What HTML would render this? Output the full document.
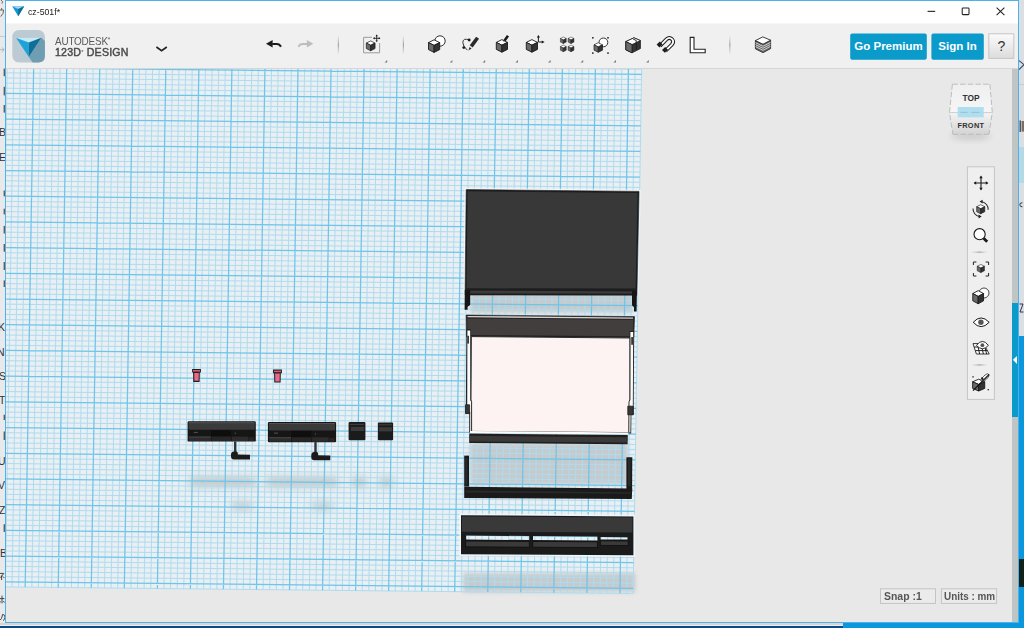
<!DOCTYPE html>
<html><head><meta charset="utf-8">
<style>
html,body{margin:0;padding:0;width:1024px;height:628px;overflow:hidden;background:#f2f2f2;font-family:"Liberation Sans",sans-serif;}
.a{position:absolute}
#title{left:6px;top:1px;width:1012px;height:22px;background:#fff}
#tb{left:6px;top:23px;width:1012px;height:45px;background:#f0f0f0;border-bottom:1px solid #d6d6d6;border-top:0;box-shadow:inset 0 1px 0 #f7f7f7}
#vp{left:6px;top:69px;width:1012px;height:553px;background:#e8e8e8}
.btn{background:#0b9bcb;color:#fff;font-weight:bold;font-size:12px;border-radius:2px;text-align:center;line-height:26px;height:26px;top:33px}
</style></head><body>
<!-- desktop behind -->
<div class="a" style="left:0;top:0;width:5px;height:623px;background:#e9e9eb"></div>
<div class="a" style="left:0;top:36px;width:5px;height:1px;background:#c8c8c8"></div>
<div class="a" style="left:1019px;top:0;width:5px;height:628px;background:#dcdfe2"></div>
<div class="a" style="left:1019px;top:147px;width:5px;height:36px;background:#b6d9e6"></div>
<div class="a" style="left:1019px;top:336px;width:5px;height:292px;background:#0b97dc"></div>
<div class="a" style="left:1019px;top:559px;width:5px;height:28px;background:#10221a"></div>
<div class="a" style="left:0;top:623px;width:843px;height:2px;background:#d8d4d0"></div><div class="a" style="left:0;top:625px;width:843px;height:1px;background:#ececec"></div>
<div class="a" style="left:0;top:626px;width:843px;height:2px;background:#0b4a8a"></div>
<div class="a" style="left:843px;top:623px;width:181px;height:5px;background:#0b97dc"></div>
<div class="a" style="left:0;top:0;width:5px;height:623px;overflow:hidden">
 <div class="a" style="left:-1px;top:126px;font-size:10.5px;color:#333;line-height:12px">B</div>
 <div class="a" style="left:-1px;top:151px;font-size:10.5px;color:#333;line-height:12px">E</div>
 <div class="a" style="left:-2px;top:321px;font-size:10.5px;color:#333;line-height:12px">K</div>
 <div class="a" style="left:-3px;top:346px;font-size:10.5px;color:#333;line-height:12px">N</div>
 <div class="a" style="left:-1px;top:370px;font-size:10.5px;color:#333;line-height:12px">S</div>
 <div class="a" style="left:-1px;top:394px;font-size:10.5px;color:#333;line-height:12px">T</div>
 <div class="a" style="left:-2px;top:455px;font-size:10.5px;color:#333;line-height:12px">U</div>
 <div class="a" style="left:-2px;top:479px;font-size:10.5px;color:#333;line-height:12px">V</div>
 <div class="a" style="left:-1px;top:504px;font-size:10.5px;color:#333;line-height:12px">Z</div>
 <div class="a" style="left:0px;top:547px;font-size:10.5px;color:#333;line-height:12px">B</div>
</div>
<svg class="a" style="left:0;top:0" width="6" height="623">
 <path d="M0,49.7 L4,49.7 M1.8,47.4 L4.2,49.7 L1.8,52" fill="none" stroke="#b0b0b0" stroke-width="0.9"/><path d="M1,0 Q3.5,1.5 2,3.6" fill="none" stroke="#6a5a4a" stroke-width="0.9"/><path d="M0,10 L3.6,10 Q4,13.5 0.6,16.6 M1.6,8 L1.6,10" fill="none" stroke="#6a5a4a" stroke-width="0.9"/><path d="M0,573.4 L3.8,573.4 L0.4,577.6 M1.6,575.6 L1.6,580 M2.8,576.4 L4.4,578" fill="none" stroke="#333" stroke-width="0.9"/><path d="M0,598.6 L4.4,598.6 M2,595.6 L2,603.4 M0.4,601.4 L0,602.6 M3.4,601 L4.4,602.6" fill="none" stroke="#333" stroke-width="0.9"/><path d="M2.6,614.4 Q1.6,619.6 0.2,620 M2.6,614.4 Q5.4,614.6 5,617.4 Q4.6,620 3,620.6" fill="none" stroke="#333" stroke-width="0.9"/>
 <g fill="#6e5a50">
  <rect x="3.6" y="68.6" width="1.4" height="7.6"/><rect x="3.6" y="86.8" width="1.4" height="8.6"/><rect x="3.6" y="105" width="1.4" height="7.6"/>
  <rect x="3.6" y="190.5" width="1.4" height="5.8"/><rect x="3.6" y="208.7" width="1.4" height="5.7"/><rect x="3.6" y="225.9" width="1.4" height="7.6"/>
  <rect x="3.6" y="244" width="1.4" height="7.7"/><rect x="3.6" y="262" width="1.4" height="8"/><rect x="3.6" y="280.4" width="1.4" height="6.6"/>
  <rect x="3.6" y="414.7" width="1.4" height="5.3"/><rect x="3.6" y="431.5" width="1.4" height="8.5"/><rect x="3.6" y="524.2" width="1.4" height="7.7"/>
 </g>
</svg>

<svg class="a" style="left:1019px;top:0" width="5" height="628"><path d="M0,60.6 L5,64.6 L0,69.6" fill="none" stroke="#3a4a6a" stroke-width="1.1"/><rect x="0" y="84" width="5" height="1" fill="#c8ccd0"/><rect x="0.6" y="120.4" width="1.2" height="11.6" fill="#2a3550"/><rect x="2.6" y="121" width="2.4" height="10.6" fill="#6a5040" opacity="0.8"/><path d="M3.4,202.8 Q0.6,202.6 0.8,204.8 Q1,207 3.4,206.8" fill="none" stroke="#333" stroke-width="1"/><path d="M0.5,304 L4,304 L1,312 L4.5,312" fill="none" stroke="#335" stroke-width="1"/></svg>
<!-- window frame -->
<div class="a" style="left:5px;top:0;width:1014px;height:623px;box-sizing:border-box;border:1px solid #4ab3ee"></div>
<div class="a" id="title"></div>
<div class="a" id="tb"></div>
<div class="a" id="vp"></div>


<!-- TITLE BAR -->
<svg class="a" style="left:0;top:0" width="1024" height="68" viewBox="0 0 1024 68">
  <defs>
    <g id="cube">
      <path d="M6,0.4 L11.6,3.2 L6,6 L0.4,3.2 Z" fill="#fff" stroke="#1a1a1a" stroke-width="0.9"/>
      <path d="M0.4,3.2 L6,6 L6,13 L0.4,10.2 Z" fill="#6a6a6a" stroke="#1a1a1a" stroke-width="0.9"/>
      <path d="M6,6 L11.6,3.2 L11.6,10.2 L6,13 Z" fill="#333" stroke="#1a1a1a" stroke-width="0.9"/>
    </g>
    <path id="tri" d="M0,2.6 L2.6,0 L2.6,2.6 Z" fill="#777"/>
  </defs>
  <!-- app icon small -->
  <path d="M12.2,6.2 L24.2,6.2 L18.2,16.2 Z" fill="#1497cf"/>
  <path d="M12.2,6.2 L24.2,6.2 L18.2,9 Z" fill="#9fd9f0"/>
  <path d="M18.2,9 L24.2,6.2 L18.2,16.2 Z" fill="#0d6f97"/>
  <!-- window controls -->
  <rect x="927.6" y="10.8" width="7.6" height="1.1" fill="#222"/>
  <rect x="962.2" y="8" width="6.8" height="6.6" rx="0.8" fill="none" stroke="#222" stroke-width="1.05"/>
  <path d="M996.6,7.6 L1004.4,15.2 M1004.4,7.6 L996.6,15.2" stroke="#222" stroke-width="1.05"/>

  <!-- logo -->
  <rect x="12.3" y="30" width="32.6" height="32.5" rx="6.5" fill="#bccbd3"/>
  <path d="M41.4,37.7 L44.9,41 L44.9,56 Q44.9,62.5 38.4,62.5 L32.6,62.5 L28.8,57 Z" fill="#6f9db1"/>
  <path d="M16.2,38 L41.4,37.7 L28.8,42.6 Z" fill="#c4e9f7"/>
  <path d="M16.2,38 L28.8,42.6 L28.8,57 Z" fill="#1ba3da"/>
  <path d="M28.8,42.6 L41.4,37.7 L28.8,57 Z" fill="#0f6f96"/>

  <!-- chevron -->
  <path d="M156.4,47 L161.6,50.6 L166.8,47" fill="none" stroke="#222" stroke-width="1.7"/>

  <!-- undo / redo -->
  <path d="M272.2,43.9 L276.8,43.9 Q279.6,43.9 281,46.8" fill="none" stroke="#1c1c1c" stroke-width="2"/>
  <path d="M266,43.8 L272.6,40 L272.6,47.6 Z" fill="#1c1c1c"/>
  <path d="M307.2,43.9 L302.6,43.9 Q299.8,43.9 298.4,46.8" fill="none" stroke="#bdbdbd" stroke-width="2"/>
  <path d="M313.4,43.8 L306.8,40 L306.8,47.6 Z" fill="#bdbdbd"/>

  <!-- separators -->
  <linearGradient id="vsep" x1="0" y1="0" x2="0" y2="1"><stop offset="0" stop-color="#aaa" stop-opacity="0"/><stop offset="0.5" stop-color="#999"/><stop offset="1" stop-color="#aaa" stop-opacity="0"/></linearGradient>
  <rect x="337.8" y="35" width="1.1" height="20" fill="url(#vsep)"/>
  <rect x="402.8" y="35" width="1.1" height="20" fill="url(#vsep)"/>
  <rect x="729.3" y="35" width="1.1" height="20" fill="url(#vsep)"/>

  <!-- import icon -->
  <path d="M372,37.3 L363.6,37.3 L363.6,52.8 L379.6,52.8 L379.6,43" fill="none" stroke="#9a9a9a" stroke-width="1"/>
  <use href="#cube" transform="translate(366,40.6) scale(0.78)"/>
  <path d="M376.7,35.4 L376.7,41.2 M373.8,38.3 L379.6,38.3" stroke="#1a1a1a" stroke-width="0.85"/>
  <path d="M376.7,34.6 L375.5,36.2 L377.9,36.2 Z M376.7,42 L375.5,40.4 L377.9,40.4 Z M373,38.3 L374.6,37.1 L374.6,39.5 Z M380.4,38.3 L378.8,37.1 L378.8,39.5 Z" fill="#1a1a1a"/>

  <!-- primitives -->
  <circle cx="440" cy="41" r="5.2" fill="#fff" stroke="#333" stroke-width="1"/>
  <use href="#cube" transform="translate(428.1,39.4)"/>
  <!-- sketch -->
  <path d="M469,40 Q463,37.6 462.8,42.6 Q463,46.6 467.4,50.2" fill="none" stroke="#333" stroke-width="1"/>
  <circle cx="469.2" cy="40" r="1.4" fill="#1a1a1a"/>
  <circle cx="463.8" cy="47.6" r="1.4" fill="#1a1a1a"/>
  <path d="M477.6,37.8 L471.2,46.4" stroke="#2a2a2a" stroke-width="3.6"/>
  <path d="M469.6,47 L471.6,48.6 L468.4,50.6 Z" fill="#2a2a2a"/>
  <!-- modify -->
  <use href="#cube" transform="translate(495.9,39.2)"/>
  <path d="M508,35.8 L504.6,40.4" stroke="#1a1a1a" stroke-width="2.6"/>
  <path d="M503.2,41.6 L504,40 L505.2,41 Z" fill="#1a1a1a"/>
  <!-- transform -->
  <use href="#cube" transform="translate(525.9,39.2)"/>
  <path d="M538.4,42 L538.4,37 M538.4,42 L542.6,42" stroke="#1a1a1a" stroke-width="1"/>
  <path d="M538.4,35 L536.8,37.6 L540,37.6 Z M544.6,42 L541.8,40.4 L541.8,43.6 Z" fill="#1a1a1a"/>
  <!-- pattern -->
  <use href="#cube" transform="translate(560.2,36.8) scale(0.52)"/>
  <use href="#cube" transform="translate(567.9,36.8) scale(0.52)"/>
  <use href="#cube" transform="translate(560.2,44.9) scale(0.52)"/>
  <use href="#cube" transform="translate(567.9,44.9) scale(0.52)"/>
  <!-- group -->
  <circle cx="603.4" cy="42.4" r="4.4" fill="#fff" stroke="#333" stroke-width="1"/>
  <use href="#cube" transform="translate(593.7,42.4) scale(0.76)"/>
  <rect x="592" y="37" width="1.6" height="1.6" fill="#333"/>
  <rect x="607.2" y="37" width="1.6" height="1.6" fill="#333"/>
  <rect x="592" y="52.3" width="1.6" height="1.6" fill="#333"/>
  <rect x="607.2" y="52.3" width="1.6" height="1.6" fill="#333"/>
  <!-- combine -->
  <path d="M625.8,41.6 L634,37.8 L640.4,40.6 L640.4,48.6 L632,52.8 L625.8,49.8 Z" fill="#333" stroke="#1a1a1a" stroke-width="0.8"/>
  <path d="M625.8,41.6 L634,37.8 L640.4,40.6 L632,44.6 Z" fill="#fff" stroke="#1a1a1a" stroke-width="0.8"/>
  <path d="M625.8,41.6 L632,44.6 L632,52.8 L625.8,49.8 Z" fill="#6a6a6a" stroke="#1a1a1a" stroke-width="0.8"/>
  <path d="M633.2,39.2 L636.2,40.4 L636.4,49.8" fill="none" stroke="#1a1a1a" stroke-width="0.9"/>
  <!-- magnet -->
  <path d="M660,45.8 L666.6,39.2 Q669.4,36.6 672,39.2 Q674.4,41.8 671.8,44.6 L665.4,51" fill="none" stroke="#1d1d1d" stroke-width="3.8"/>
  <path d="M660,45.8 L666.6,39.2 Q669.4,36.6 672,39.2 Q674.4,41.8 671.8,44.6 L665.4,51" fill="none" stroke="#fff" stroke-width="1.8"/>
  <path d="M656.6,44.6 L659.8,41.6 L662.6,44.4 L659.4,47.4 Z M662,50 L665.2,47 L668,49.8 L664.8,52.8 Z" fill="#1d1d1d"/>
  <!-- measure -->
  <path d="M690.2,37.4 L694,37.4 L694,49.2 L705.2,49.2 L705.2,52.8 L690.2,52.8 Z" fill="#fff" stroke="#222" stroke-width="1.1"/>
  <!-- material -->
  <path d="M755.4,40.6 L763,44.2 L770.6,40.2 L770.6,48.6 L763,52.6 L755.4,48.8 Z" fill="#6a6a6a" stroke="#222" stroke-width="0.9"/>
  <g stroke="#f4f4f4" stroke-width="0.7" fill="none">
    <path d="M755.4,42.6 L763,46.3 L770.6,42.3 M755.4,44.6 L763,48.3 L770.6,44.3 M755.4,46.6 L763,50.3 L770.6,46.3"/>
  </g>
  <path d="M755.4,40.6 L762.8,36.9 L770.6,40.2 L763,44.2 Z" fill="#fff" stroke="#2a2a2a" stroke-width="0.9"/>
  <!-- small triangles -->
  <use href="#tri" x="384.6" y="60"/>
  <use href="#tri" x="449.8" y="60"/>
  <use href="#tri" x="482.6" y="60"/>
  <use href="#tri" x="515.4" y="60"/>
  <use href="#tri" x="548" y="60"/>
  <use href="#tri" x="580.6" y="60"/>
  <use href="#tri" x="613.4" y="60"/>
  <use href="#tri" x="646.2" y="60"/>

  <!-- help button -->
  <linearGradient id="hg" x1="0" y1="0" x2="0" y2="1"><stop offset="0" stop-color="#fbfbfb"/><stop offset="1" stop-color="#dcdcdc"/></linearGradient>
  <rect x="988.8" y="33.8" width="25" height="24.6" fill="url(#hg)" stroke="#c6c6c6" stroke-width="1"/>
  <rect x="850.2" y="33.4" width="76.6" height="26.4" rx="2" fill="#0b9bcb"/>
  <rect x="931.4" y="33.4" width="52.4" height="26.4" rx="2" fill="#0b9bcb"/>
</svg>
<div class="a" style="left:28px;top:6.4px;font-size:9.5px;color:#222;line-height:12px;transform:scaleX(0.92);transform-origin:0 0">cz-501f*</div>
<div class="a" style="left:55px;top:34.6px;font-size:11px;color:#5a5a5a;line-height:12px;transform:scaleX(0.9);transform-origin:0 0;letter-spacing:-0.2px">AUTODESK<span style="font-size:7px;vertical-align:top;position:relative;top:-1px">*</span></div>
<div class="a" style="left:55px;top:45.5px;font-size:11px;font-weight:normal;-webkit-text-stroke:0.45px #4a4a4a;color:#4a4a4a;line-height:12px;transform:scaleX(0.965);transform-origin:0 0;letter-spacing:0.2px">123D<span style="font-size:6px;vertical-align:top;position:relative;top:0px;-webkit-text-stroke:0">*</span> DESIGN</div>
<div class="a" style="left:850px;top:33px;width:77px;text-align:center;font-size:11.5px;font-weight:bold;color:#fff;line-height:26px">Go Premium</div>
<div class="a" style="left:931px;top:33px;width:53px;text-align:center;font-size:11.5px;font-weight:bold;color:#fff;line-height:26px">Sign In</div>
<div class="a" style="left:989px;top:33px;width:25px;text-align:center;font-size:14px;color:#333;line-height:26px">?</div>

<!-- viewport svg -->
<svg class="a" style="left:0;top:0" width="1024" height="628" viewBox="0 0 1024 628">
  <defs>
    <clipPath id="vpc"><rect x="6" y="69" width="1006" height="553"/></clipPath>
    <filter id="blur4" x="-50%" y="-50%" width="200%" height="200%"><feGaussianBlur stdDeviation="4"/></filter>
    <filter id="gblur" x="0" y="0" width="1024" height="628" filterUnits="userSpaceOnUse"><feGaussianBlur stdDeviation="0.35"/></filter>
    <filter id="blur2" x="-50%" y="-50%" width="200%" height="200%"><feGaussianBlur stdDeviation="2"/></filter>
  </defs>
  <g clip-path="url(#vpc)">
    <polygon points="-12.53,62.36 641.66,69.23 633.13,593.51 -21.06,586.64" fill="#e9eff2"/>
    <!-- shadows -->
    <g fill="#8a8a8a" opacity="0.5" filter="url(#blur4)">
      <rect x="190" y="478" width="66" height="8"/>
      <rect x="266" y="478" width="72" height="8"/>
      <rect x="352" y="478" width="14" height="8"/>
      <rect x="380" y="478" width="12" height="8"/>
      <rect x="232" y="503" width="20" height="6"/>
      <rect x="312" y="503" width="20" height="6"/>
    </g>
    <g fill="#8a8a8a" opacity="0.36" filter="url(#blur2)">
      <rect x="470" y="293" width="163" height="20"/>
      <rect x="470" y="443" width="158" height="42"/>
      <rect x="463" y="573" width="172" height="19"/>
    </g>
    <g>
    <path d="M-12.53 62.36L-21.06 586.64M-5.93 62.43L-14.45 586.71M7.29 62.57L-1.24 586.85M13.90 62.64L5.37 586.92M20.51 62.71L11.98 586.99M27.11 62.78L18.59 587.06M40.33 62.92L31.80 587.20M46.94 62.99L38.41 587.27M53.55 63.06L45.02 587.34M60.15 63.13L51.63 587.41M73.37 63.27L64.84 587.55M79.98 63.34L71.45 587.62M86.59 63.41L78.06 587.69M93.19 63.47L84.67 587.75M106.41 63.61L97.88 587.89M113.02 63.68L104.49 587.96M119.63 63.75L111.10 588.03M126.23 63.82L117.71 588.10M139.45 63.96L130.92 588.24M146.06 64.03L137.53 588.31M152.67 64.10L144.14 588.38M159.27 64.17L150.75 588.45M172.49 64.31L163.96 588.59M179.10 64.38L170.57 588.66M185.71 64.45L177.18 588.73M192.31 64.52L183.79 588.80M205.53 64.65L197.00 588.93M212.14 64.72L203.61 589.00M218.75 64.79L210.22 589.07M225.35 64.86L216.83 589.14M238.57 65.00L230.04 589.28M245.18 65.07L236.65 589.35M251.79 65.14L243.26 589.42M258.39 65.21L249.87 589.49M271.61 65.35L263.08 589.63M278.22 65.42L269.69 589.70M284.83 65.49L276.30 589.77M291.43 65.56L282.91 589.84M304.65 65.70L296.12 589.98M311.26 65.76L302.73 590.04M317.87 65.83L309.34 590.11M324.47 65.90L315.95 590.18M337.69 66.04L329.16 590.32M344.30 66.11L335.77 590.39M350.91 66.18L342.38 590.46M357.51 66.25L348.99 590.53M370.73 66.39L362.20 590.67M377.34 66.46L368.81 590.74M383.95 66.53L375.42 590.81M390.55 66.60L382.03 590.88M403.77 66.74L395.24 591.02M410.38 66.81L401.85 591.09M416.99 66.88L408.46 591.16M423.59 66.94L415.07 591.22M436.81 67.08L428.28 591.36M443.42 67.15L434.89 591.43M450.03 67.22L441.50 591.50M456.63 67.29L448.11 591.57M469.85 67.43L461.32 591.71M476.46 67.50L467.93 591.78M483.07 67.57L474.54 591.85M489.67 67.64L481.15 591.92M502.89 67.78L494.36 592.06M509.50 67.85L500.97 592.13M516.11 67.92L507.58 592.20M522.71 67.99L514.19 592.27M535.93 68.12L527.40 592.40M542.54 68.19L534.01 592.47M549.15 68.26L540.62 592.54M555.75 68.33L547.23 592.61M568.97 68.47L560.44 592.75M575.58 68.54L567.05 592.82M582.19 68.61L573.66 592.89M588.79 68.68L580.27 592.96M602.01 68.82L593.48 593.10M608.62 68.89L600.09 593.17M615.23 68.96L606.70 593.24M621.83 69.03L613.31 593.31M635.05 69.17L626.52 593.45M641.66 69.23L633.13 593.51M-12.53 62.36L641.66 69.23M-12.70 72.64L641.49 79.51M-12.79 77.78L641.41 84.65M-12.87 82.92L641.32 89.79M-12.95 88.06L641.24 94.93M-13.12 98.34L641.07 105.21M-13.20 103.48L640.99 110.35M-13.29 108.62L640.91 115.49M-13.37 113.76L640.82 120.63M-13.54 124.04L640.65 130.91M-13.62 129.18L640.57 136.05M-13.70 134.32L640.49 141.19M-13.79 139.46L640.40 146.33M-13.96 149.74L640.24 156.61M-14.04 154.88L640.15 161.75M-14.12 160.02L640.07 166.89M-14.21 165.16L639.99 172.03M-14.37 175.44L639.82 182.31M-14.46 180.58L639.73 187.45M-14.54 185.72L639.65 192.59M-14.62 190.86L639.57 197.73M-14.79 201.14L639.40 208.01M-14.88 206.28L639.32 213.15M-14.96 211.42L639.23 218.29M-15.04 216.56L639.15 223.43M-15.21 226.84L638.98 233.71M-15.29 231.98L638.90 238.85M-15.38 237.12L638.82 243.99M-15.46 242.26L638.73 249.13M-15.63 252.54L638.56 259.41M-15.71 257.68L638.48 264.55M-15.79 262.82L638.40 269.69M-15.88 267.96L638.31 274.83M-16.05 278.24L638.15 285.11M-16.13 283.38L638.06 290.25M-16.21 288.52L637.98 295.39M-16.30 293.66L637.90 300.53M-16.46 303.94L637.73 310.81M-16.55 309.08L637.64 315.95M-16.63 314.22L637.56 321.09M-16.71 319.36L637.48 326.23M-16.88 329.64L637.31 336.51M-16.97 334.78L637.23 341.65M-17.05 339.92L637.14 346.79M-17.13 345.06L637.06 351.93M-17.30 355.34L636.89 362.21M-17.38 360.48L636.81 367.35M-17.47 365.62L636.73 372.49M-17.55 370.76L636.64 377.63M-17.72 381.04L636.47 387.91M-17.80 386.18L636.39 393.05M-17.88 391.32L636.31 398.19M-17.97 396.46L636.22 403.33M-18.14 406.74L636.06 413.61M-18.22 411.88L635.97 418.75M-18.30 417.02L635.89 423.89M-18.39 422.16L635.81 429.03M-18.55 432.44L635.64 439.31M-18.64 437.58L635.55 444.45M-18.72 442.72L635.47 449.59M-18.80 447.86L635.39 454.73M-18.97 458.14L635.22 465.01M-19.06 463.28L635.14 470.15M-19.14 468.42L635.05 475.29M-19.22 473.56L634.97 480.43M-19.39 483.84L634.80 490.71M-19.47 488.98L634.72 495.85M-19.56 494.12L634.64 500.99M-19.64 499.26L634.55 506.13M-19.81 509.54L634.38 516.41M-19.89 514.68L634.30 521.55M-19.97 519.82L634.22 526.69M-20.06 524.96L634.13 531.83M-20.23 535.24L633.97 542.11M-20.31 540.38L633.88 547.25M-20.39 545.52L633.80 552.39M-20.48 550.66L633.72 557.53M-20.64 560.94L633.55 567.81M-20.73 566.08L633.46 572.95M-20.81 571.22L633.38 578.09M-20.89 576.36L633.30 583.23M-21.06 586.64L633.13 593.51" stroke="#aedcef" stroke-width="1" fill="none"/>
    <path d="M0.68 62.50L-7.85 586.78M33.72 62.85L25.19 587.13M66.76 63.20L58.23 587.48M99.80 63.54L91.27 587.82M132.84 63.89L124.31 588.17M165.88 64.24L157.35 588.52M198.92 64.59L190.39 588.86M231.96 64.93L223.43 589.21M265.00 65.28L256.47 589.56M298.04 65.63L289.51 589.91M331.08 65.97L322.55 590.25M364.12 66.32L355.59 590.60M397.16 66.67L388.63 590.95M430.20 67.01L421.67 591.29M463.24 67.36L454.71 591.64M496.28 67.71L487.75 591.99M529.32 68.06L520.79 592.33M562.36 68.40L553.83 592.68M595.40 68.75L586.87 593.03M628.44 69.10L619.91 593.38M-12.62 67.50L641.57 74.37M-13.04 93.20L641.16 100.07M-13.45 118.90L640.74 125.77M-13.87 144.60L640.32 151.47M-14.29 170.30L639.90 177.17M-14.71 196.00L639.48 202.87M-15.13 221.70L639.07 228.57M-15.54 247.40L638.65 254.27M-15.96 273.10L638.23 279.97M-16.38 298.80L637.81 305.67M-16.80 324.50L637.39 331.37M-17.22 350.20L636.98 357.07M-17.63 375.90L636.56 382.77M-18.05 401.60L636.14 408.47M-18.47 427.30L635.72 434.17M-18.89 453.00L635.30 459.87M-19.31 478.70L634.89 485.57M-19.72 504.40L634.47 511.27M-20.14 530.10L634.05 536.97M-20.56 555.80L633.63 562.67M-20.98 581.50L633.21 588.37" stroke="#6cc5ea" stroke-width="1.25" fill="none"/>
    </g>
    <!-- OBJECTS -->
    <g id="obj1">
      <path d="M465.1,295 L466.2,189.6 L639,191.4 L636.9,295.2" fill="none" stroke="#f4f8fa" stroke-opacity="0.8" stroke-width="3.4"/>
      <polygon points="466.2,189.6 639,191.4 636.9,295.2 465.1,295" fill="#1d1d1d" stroke="#1d1d1d" stroke-width="0.6"/>
      <polygon points="467.6,191.2 637.5,193 635.6,288.6 466.5,288.3" fill="#383838"/>
      <polygon points="467,290.4 634.6,291.6 634.6,293.6 467,293.4" fill="#3c3c3c"/>
      <polygon points="464.8,290 470.2,290 470.2,305 467.6,306.8 467.6,309.8 464.6,309.8" fill="#161616"/>
      <polygon points="632,291 636.9,291 636.6,311.4 634,311.4 634,307.2 632,305.2" fill="#161616"/>
    </g>
    <g id="obj2">
      <path d="M466.4,336.4 L466.1,315 L634.6,316.6 L633.8,337.6" fill="none" stroke="#f4f8fa" stroke-opacity="0.45" stroke-width="2.6"/>
      <polygon points="466.1,315 634.6,316.6 633.8,337.6 466.4,336.4" fill="#222" stroke="#222" stroke-width="0.6"/>
      <polygon points="467.3,318.4 633.3,319.8 632.8,336.2 467.5,335" fill="#433e3e"/>
      <line x1="467.5" y1="316.6" x2="633" y2="318.1" stroke="#d9d0d0" stroke-width="1.4"/>
      <polygon points="466.4,329.2 471,329.2 471.2,400 472.4,401.6 472.6,432.6 469.2,432.6 469.2,413.6 465.8,413.6" fill="#222"/>
      <polygon points="467.4,330.4 470.2,330.4 470.4,400.4 471.6,402 471.8,431.6 470.2,431.6 470.2,412 467.2,412" fill="#fbfbfb"/>
      <polygon points="634.2,331 629.6,331 629.4,399.8 628.2,401.4 627.8,433.4 631.2,433.4 631.4,414.8 633.6,414.8" fill="#222"/>
      <polygon points="633.2,332 630.4,332 630.2,400.2 629,401.8 628.8,432.6 630.4,432.6 630.6,413.8 632.8,413.8" fill="#fbfbfb"/>
      <polygon points="471.4,336.6 629.8,338 629.8,400 629,401.6 628.8,432.6 471.6,431.4 471.6,401.6 471,400" fill="#fdf3f3" stroke="#1c1c1c" stroke-width="0.9"/>
      <rect x="467.2" y="335.8" width="1.8" height="7.8" fill="#3a3a3a"/>
      <rect x="631.2" y="337" width="1.8" height="7.8" fill="#3a3a3a"/>
      <polygon points="465.5,404.8 469.6,404.8 469.6,413.6 465.5,413.6" fill="#3a3636" stroke="#1a1a1a" stroke-width="0.8"/>
      <polygon points="627.8,406.2 633.2,406.2 633.2,414.8 627.8,414.8" fill="#3a3636" stroke="#1a1a1a" stroke-width="0.8"/>
      <polygon points="470,431 628.6,432.4 628.2,434.4 470,433.2" fill="#fbfbfb"/>
      <polygon points="469.2,433.6 627.8,435 627.6,444.2 469.2,443" fill="#1f1f1f"/>
      <polygon points="469.8,435.8 627,437.2 626.8,442.6 469.8,441.6" fill="#3c3939"/>
    </g>
    <g id="obj3">
      <polygon points="464.2,455.6 469,455.6 469,486.6 464.2,486.6" fill="#1a1a1a"/>
      <polygon points="626.4,457.2 632.3,457.2 632.1,492 626.4,492" fill="#1a1a1a"/>
      <polygon points="464.2,486.8 632.2,488.4 631.8,499 464.2,498" fill="#1a1a1a"/>
      <polygon points="465.6,490.6 630.8,492.2 630.6,493.8 465.6,492.4" fill="#2a2a2a"/>
      <polygon points="465.3,457.8 467.4,457.8 467.4,485 465.3,485" fill="#2a2a2a"/>
      <polygon points="628,459 630.6,459 630.6,486 628,486" fill="#2a2a2a"/>
    </g>
    <g id="obj4">
      <polygon points="461,515.2 633.4,516.4 633.4,555.2 461,554.2" fill="none" stroke="#f4f8fa" stroke-opacity="0.8" stroke-width="3.4"/>
      <path fill-rule="evenodd" fill="#1b1b1b" d="M461,515.2 L633.4,516.4 L633.4,555.2 L461,554.2 Z M466.2,535.6 L529.2,536 L529.2,540 L466.2,539.6 Z M533,536 L597.4,536.4 L597.4,540.4 L533,540 Z M600.6,537 L627.6,537.2 L627.6,539.6 L600.6,539.4 Z"/>
      <polygon points="462,516.4 632.4,517.6 632.4,532.6 462,531.8" fill="#393939"/>
      <polygon points="465.6,541 529.4,541.4 529.4,547.2 465.6,546.8" fill="#3a3a3a" stroke="#0e0e0e" stroke-width="0.8"/>
      <polygon points="532.8,541.4 597.4,541.8 597.4,547.6 532.8,547.2" fill="#3a3a3a" stroke="#0e0e0e" stroke-width="0.8"/>
      <polygon points="600.4,540.8 628.2,541 628.2,545.6 600.4,545.4" fill="#3a3a3a" stroke="#0e0e0e" stroke-width="0.8"/>
    </g>
    <g id="small">
      <polygon points="192.1,369 200.9,369 200.9,372.6 199.8,372.6 199.6,381.9 193.3,381.9 193.1,372.6 192.1,372.6" fill="#1f1f1f"/>
      <polygon points="194.2,373 198.8,373 198.6,380.8 194.4,380.8" fill="#ec6a86"/><rect x="193" y="370" width="7" height="1.6" fill="#d85a74"/>
      <polygon points="273,369.6 281.9,369.6 281.9,373.2 280.8,373.2 280.6,382.4 274.3,382.4 274.1,373.2 273,373.2" fill="#1f1f1f"/>
      <polygon points="275.1,373.6 279.8,373.6 279.6,381.4 275.3,381.4" fill="#ec6a86"/><rect x="273.9" y="370.6" width="7.1" height="1.6" fill="#d85a74"/>

      <g transform="translate(0,0)">
      <rect x="187.6" y="421.2" width="68.2" height="20.4" rx="1.2" fill="#161616"/>
      <rect x="188.6" y="422.2" width="66.2" height="7.6" rx="0.8" fill="#3a3a3a"/>
      <rect x="188.8" y="422.3" width="65.8" height="0.9" fill="#555"/>
      <rect x="211" y="430.2" width="20" height="6" fill="#0e0e0e"/>
      <rect x="193.8" y="431.9" width="4" height="1" fill="#555"/>
      <circle cx="235.2" cy="433.2" r="0.7" fill="#555"/>
      <rect x="188.8" y="436.6" width="22" height="4.4" fill="#2c2c2c"/>
      <rect x="188.8" y="436.6" width="22" height="0.9" fill="#4a4a4a"/>
      <rect x="211.6" y="436.6" width="19.4" height="4.4" fill="#262626"/>
      <rect x="231.8" y="436.6" width="16.6" height="4.4" fill="#2c2c2c"/>
      <rect x="249" y="437.2" width="5.2" height="3.8" fill="#262626"/>
      <rect x="234" y="441.4" width="2.4" height="11.2" fill="#333"/>
      <path d="M233.6,451.4 L236.6,451.4 Q237.6,451.4 237.8,453 L237.8,454.6 L250,454.8 L250,459.6 L234,459.6 Q231,459.4 231,456.2 L231,454 Q231.2,451.4 233.6,451.4 Z" fill="#1b1b1b"/>
      </g>
      <g transform="translate(80.3,0.7)">
      <rect x="187.6" y="421.2" width="68.2" height="20.4" rx="1.2" fill="#161616"/>
      <rect x="188.6" y="422.2" width="66.2" height="7.6" rx="0.8" fill="#3a3a3a"/>
      <rect x="188.8" y="422.3" width="65.8" height="0.9" fill="#555"/>
      <rect x="211" y="430.2" width="20" height="6" fill="#0e0e0e"/>
      <rect x="193.8" y="431.9" width="4" height="1" fill="#555"/>
      <circle cx="235.2" cy="433.2" r="0.7" fill="#555"/>
      <rect x="188.8" y="436.6" width="22" height="4.4" fill="#2c2c2c"/>
      <rect x="188.8" y="436.6" width="22" height="0.9" fill="#4a4a4a"/>
      <rect x="211.6" y="436.6" width="19.4" height="4.4" fill="#262626"/>
      <rect x="231.8" y="436.6" width="16.6" height="4.4" fill="#2c2c2c"/>
      <rect x="249" y="437.2" width="5.2" height="3.8" fill="#262626"/>
      <rect x="234" y="441.4" width="2.4" height="11.2" fill="#333"/>
      <path d="M233.6,451.4 L236.6,451.4 Q237.6,451.4 237.8,453 L237.8,454.6 L250,454.8 L250,459.6 L234,459.6 Q231,459.4 231,456.2 L231,454 Q231.2,451.4 233.6,451.4 Z" fill="#1b1b1b"/>
      </g>
      <rect x="348.6" y="421.9" width="16.8" height="18.3" rx="1" fill="#1b1b1b"/>
      <rect x="349.8" y="423.8" width="14.4" height="1.2" fill="#3e3e3e"/>
      <rect x="350.8" y="426.8" width="13.4" height="4.2" fill="#3a3a3a"/>
      <rect x="377.9" y="422.4" width="15.2" height="17.8" rx="1" fill="#1b1b1b"/>
      <rect x="379" y="424.2" width="13" height="1.2" fill="#3e3e3e"/>
      <rect x="379" y="427.2" width="13" height="4.2" fill="#3a3a3a"/>
    </g>
  </g>
</svg>

<!-- VIEWPORT UI -->
<svg class="a" style="left:0;top:0" width="1024" height="628" viewBox="0 0 1024 628">
  <defs>
    <linearGradient id="vcf" x1="0" y1="0" x2="0" y2="1"><stop offset="0" stop-color="#f4f4f4"/><stop offset="1" stop-color="#d4d4d4"/></linearGradient>
    <linearGradient id="vct" x1="0" y1="0" x2="0" y2="1"><stop offset="0" stop-color="#efefef"/><stop offset="1" stop-color="#f6f6f6"/></linearGradient>
    <linearGradient id="sep" x1="0" y1="0" x2="1" y2="0"><stop offset="0" stop-color="#bbb" stop-opacity="0"/><stop offset="0.5" stop-color="#999"/><stop offset="1" stop-color="#bbb" stop-opacity="0"/></linearGradient>
    <filter id="vcs" x="-50%" y="-50%" width="200%" height="200%"><feGaussianBlur stdDeviation="3"/></filter>
    <g id="cube2">
      <path d="M6,0.4 L11.6,3.2 L6,6 L0.4,3.2 Z" fill="#fff" stroke="#1a1a1a" stroke-width="0.9"/>
      <path d="M0.4,3.2 L6,6 L6,13 L0.4,10.2 Z" fill="#6a6a6a" stroke="#1a1a1a" stroke-width="0.9"/>
      <path d="M6,6 L11.6,3.2 L11.6,10.2 L6,13 Z" fill="#333" stroke="#1a1a1a" stroke-width="0.9"/>
    </g>
  </defs>
  <!-- right strip -->
  <rect x="1012" y="69" width="6" height="553" fill="#bfc4c4"/>
  <rect x="1012" y="303" width="6" height="114" fill="#0a9bcb"/>
  <path d="M1012.9,359.8 L1017,355.9 L1017,363.9 Z" fill="#fff"/>

  <!-- view cube -->
  <ellipse cx="970.6" cy="136" rx="20" ry="4" fill="#000" opacity="0.12" filter="url(#vcs)"/>
  <path d="M952.4,84.2 L989.9,84.2 L992.3,112.6 L949.5,112.6 Z" fill="url(#vct)"/>
  <path d="M949.5,112.6 L992.3,112.6 L988.9,134.3 L952.9,134.3 Z" fill="url(#vcf)"/>
  <g fill="none" stroke="#b8b8b8" stroke-width="0.9" stroke-dasharray="5.5,2.2">
    <path d="M952.4,84.2 L989.9,84.2"/><path d="M989.9,84.2 L992.3,112.6 L988.9,134.3"/><path d="M952.9,134.3 L988.9,134.3"/><path d="M952.4,84.2 L949.5,112.6 L952.9,134.3"/>
  </g>
  <path d="M949.5,112.6 L992.3,112.6" stroke="#c4c4c4" stroke-width="0.8"/>
  <rect x="957.7" y="107" width="26" height="10.4" fill="#abdcef" opacity="0.95"/>
  <path d="M960.5,112.4 L967.5,112.4 M971.5,112.4 L979.5,112.4" stroke="#9ab8c4" stroke-width="0.8"/>

  <!-- nav bar -->
  <rect x="967.4" y="166.8" width="27" height="232.6" fill="#efefef" stroke="#c6c6c6" stroke-width="1"/>
  <!-- pan -->
  <g stroke="#1a1a1a" stroke-width="1.1">
    <path d="M981,176.4 L981,189.6 M974.4,183 L987.6,183"/>
  </g>
  <path d="M981,175.6 L979.3,178.2 L982.7,178.2 Z M981,190.4 L979.3,187.8 L982.7,187.8 Z M973.6,183 L976.2,181.3 L976.2,184.7 Z M988.4,183 L985.8,181.3 L985.8,184.7 Z" fill="#1a1a1a"/>
  <!-- orbit -->
  <use href="#cube2" transform="translate(976.4,204.4) scale(0.72)"/>
  <path d="M981.6,201.8 A7.6,7.6 0 0 1 988.2,209.8" fill="none" stroke="#222" stroke-width="1.05"/>
  <path d="M979.4,216.4 A7.6,7.6 0 0 1 973,208.6" fill="none" stroke="#222" stroke-width="1.05"/>
  <path d="M979.6,201.6 L982.6,199.8 L982.6,203.6 Z M981.6,216.6 L978.6,218.4 L978.6,214.6 Z" fill="#222"/>
  <!-- zoom -->
  <circle cx="979.6" cy="234.2" r="5.6" fill="#fff" stroke="#1a1a1a" stroke-width="1.1"/>
  <path d="M983.6,238.2 L987.2,241.8" stroke="#1a1a1a" stroke-width="2.8"/>
  <rect x="970.8" y="251.6" width="17.4" height="1.1" fill="url(#sep)"/>
  <!-- fit -->
  <path d="M973.4,265 L973.4,262 L976.4,262 M985.6,262 L988.6,262 L988.6,265 M988.6,273 L988.6,276 L985.6,276 M976.4,276 L973.4,276 L973.4,273" fill="none" stroke="#222" stroke-width="1"/>
  <use href="#cube2" transform="translate(977,264.2) scale(0.64)"/>
  <!-- solid -->
  <circle cx="984" cy="293" r="5" fill="#fff" stroke="#333" stroke-width="0.9"/>
  <use href="#cube2" transform="translate(972.4,290.2) scale(0.96,1.04)"/>
  <!-- eye -->
  <path d="M973.2,322.3 Q981,313.6 989.2,322.3 Q981,331 973.2,322.3 Z" fill="#fff" stroke="#1a1a1a" stroke-width="1"/>
  <circle cx="980.9" cy="322.3" r="2.7" fill="#555"/>
  <!-- grid-eye -->
  <path d="M973,343.6 L983.6,343.6 L989.2,354 L976.4,354 Z" fill="#fff" stroke="#222" stroke-width="0.9"/>
  <path d="M974.2,347 L985.4,347 M975.4,350.6 L987.4,350.6 M977.4,343.6 L979.6,354 M981,343.6 L983.4,354 M984.4,345 L986.6,354" stroke="#222" stroke-width="1"/>
  <path d="M976.4,345.4 Q982.4,337.4 988.4,345.4 Q982.4,352 976.4,345.4 Z" fill="#fff" stroke="#1a1a1a" stroke-width="0.9"/>
  <circle cx="982.4" cy="345.2" r="1.9" fill="#555"/>
  <rect x="970.8" y="364.4" width="17.4" height="1.1" fill="url(#sep)"/>
  <!-- material -->
  <use href="#cube2" transform="translate(972.2,378.8) scale(1.08,0.94)"/>
  <ellipse cx="985" cy="377.8" rx="5" ry="2" transform="rotate(-45 985 377.8)" fill="#fff" fill-opacity="0.6" stroke="#333" stroke-width="0.8"/>
  <path d="M981.4,377.6 L983.4,379.6" stroke="#1a1a1a" stroke-width="1.6"/>
  <path d="M973,390.6 L989.2,374.4" stroke="#111" stroke-width="1.3"/>
  <rect x="972.4" y="376.2" width="1.3" height="1.3" fill="#222"/>
  <rect x="987.6" y="389" width="1.3" height="1.3" fill="#222"/>

  <!-- snap / units -->
  <rect x="880.5" y="588.8" width="55" height="14.6" fill="#ebebeb" stroke="#c4c4c4" stroke-width="1"/>
  <rect x="941.4" y="588.8" width="55.2" height="14.6" fill="#ebebeb" stroke="#c4c4c4" stroke-width="1"/>
</svg>
<div class="a" style="left:951px;top:92.6px;width:40px;text-align:center;font-size:8.4px;font-weight:bold;color:#333;line-height:10px">TOP</div>
<div class="a" style="left:949.4px;top:120.6px;width:43px;text-align:center;font-size:7.4px;font-weight:bold;color:#333;line-height:10px;letter-spacing:0.3px">FRONT</div>
<div class="a" style="left:883.6px;top:590px;font-size:11px;font-weight:bold;color:#555;line-height:12px;transform:scaleX(0.95);transform-origin:0 0">Snap :1</div>
<div class="a" style="left:943.6px;top:590px;font-size:11px;font-weight:bold;color:#555;line-height:12px;transform:scaleX(0.9);transform-origin:0 0">Units : mm</div>

</body></html>
